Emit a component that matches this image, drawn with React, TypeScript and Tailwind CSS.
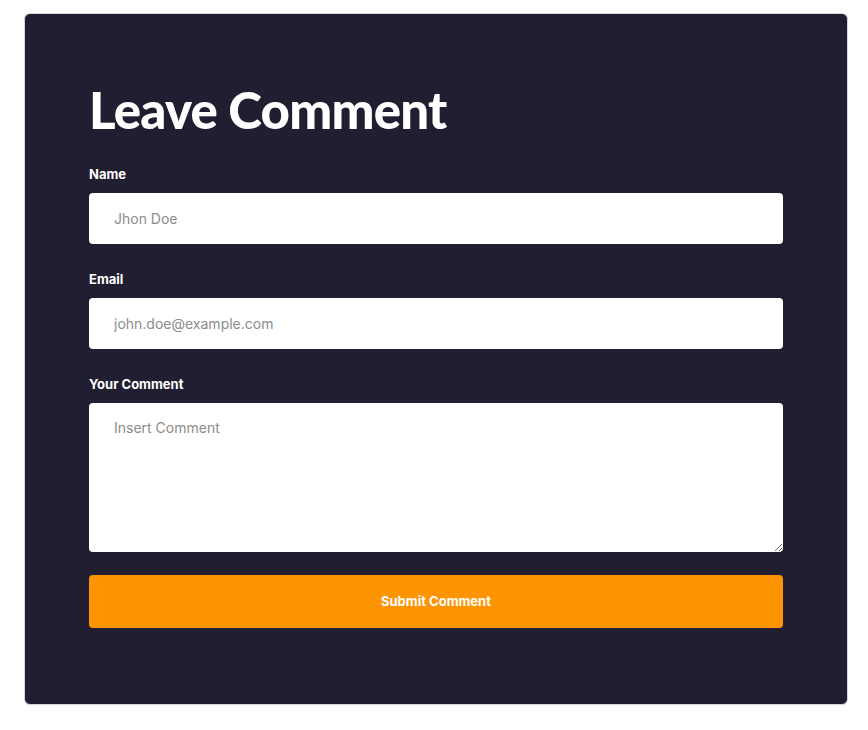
import React from 'react';

const labelCls = 'mb-[9px] block text-[13px] font-bold leading-5 text-white';
const fieldCls =
  'block w-full rounded-[4px] bg-white px-[25px] text-[14px] text-gray-800 placeholder:text-[#8c8c8c] focus:outline-none';

export default function App() {
  return (
    <div className="min-h-[730px] bg-white pl-[24px] pr-[20px] pt-[13px] font-['Inter',sans-serif]">
      <div className="rounded-[6px] border border-[#d5d5dc] bg-[#201e30] px-[64px] pb-[76px] pt-[66px]">
        <h2 className="mb-[24px] font-['Lato',sans-serif] text-[51px] font-black leading-[60px] tracking-[-0.8px] text-white">
          Leave Comment
        </h2>
        <form onSubmit={(e) => e.preventDefault()}>
          <div className="mb-[25px]">
            <label className={labelCls}>Name</label>
            <input type="text" placeholder="Jhon Doe" className={`${fieldCls} h-[51px]`} />
          </div>
          <div className="mb-[25px]">
            <label className={labelCls}>Email</label>
            <input
              type="email"
              placeholder="john.doe@example.com"
              className={`${fieldCls} h-[51px]`}
            />
          </div>
          <div className="mb-[23px]">
            <label className={labelCls}>Your Comment</label>
            <textarea
              placeholder="Insert Comment"
              className={`${fieldCls} h-[149px] pt-[14px]`}
            />
          </div>
          <button
            type="submit"
            className="h-[53px] w-full rounded-[4px] bg-[#ff9403] text-[13px] font-bold text-white"
          >
            Submit Comment
          </button>
        </form>
      </div>
    </div>
  );
}
